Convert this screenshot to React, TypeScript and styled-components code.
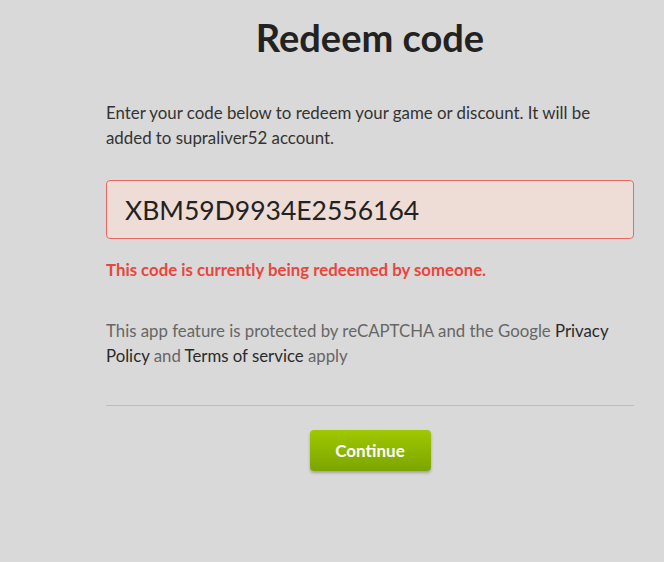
import React from "react";
import styled, { createGlobalStyle } from "styled-components";

const Global = createGlobalStyle`
  html, body { margin: 0; padding: 0; background: #d9d9d9; }
  body { font-family: Lato, "Open Sans", sans-serif; }
  * { box-sizing: border-box; }
`;

const Page = styled.div`
  width: 664px;
  height: 562px;
  background: #d9d9d9;
  padding: 0 30px 0 106px;
  display: flex;
  flex-direction: column;
`;

const Title = styled.h1`
  margin: 14px 0 0;
  font-size: 38px;
  line-height: 46px;
  font-weight: 700;
  color: #222;
  text-align: center;
`;

const Intro = styled.p`
  margin: 40px 0 0;
  font-size: 16.85px;
  line-height: 25px;
  color: #333;
`;

const CodeInput = styled.div`
  margin-top: 30px;
  height: 59px;
  border: 1px solid #e66a62;
  border-radius: 4px;
  background: #eeddd6;
  padding: 0 18px;
  display: flex;
  align-items: center;
  font-size: 26.5px;
  color: #222;
`;

const ErrorText = styled.p`
  margin: 20px 0 0;
  font-size: 16.8px;
  line-height: 21px;
  font-weight: 700;
  color: #e8463d;
`;

const Notice = styled.p`
  margin: 38px 0 0;
  font-size: 16.8px;
  line-height: 25px;
  color: #666;
`;

const Link = styled.span`
  color: #2a2a2a;
`;

const Divider = styled.hr`
  margin: 37px 0 0;
  border: none;
  border-top: 1px solid #bdbdbd;
  height: 0;
`;

const Actions = styled.div`
  margin-top: 24px;
  display: flex;
  justify-content: center;
`;

const Button = styled.button`
  width: 121px;
  height: 41px;
  border: none;
  border-radius: 4px;
  background: linear-gradient(#a0c800, #7ba500);
  box-shadow: 0 2px 3px rgba(0, 0, 0, 0.25);
  color: #fff;
  font-family: Lato, sans-serif;
  font-size: 17px;
  font-weight: 700;
  cursor: pointer;
`;

export default function App() {
  return (
    <>
      <Global />
      <Page>
        <Title>Redeem code</Title>
        <Intro>
          Enter your code below to redeem your game or discount. It will be added to supraliver52 account.
        </Intro>
        <CodeInput>XBM59D9934E2556164</CodeInput>
        <ErrorText>This code is currently being redeemed by someone.</ErrorText>
        <Notice>
          This app feature is protected by reCAPTCHA and the Google <Link>Privacy</Link>{" "}
          <Link>Policy</Link> and <Link>Terms of service</Link> apply
        </Notice>
        <Divider />
        <Actions>
          <Button>Continue</Button>
        </Actions>
      </Page>
    </>
  );
}
